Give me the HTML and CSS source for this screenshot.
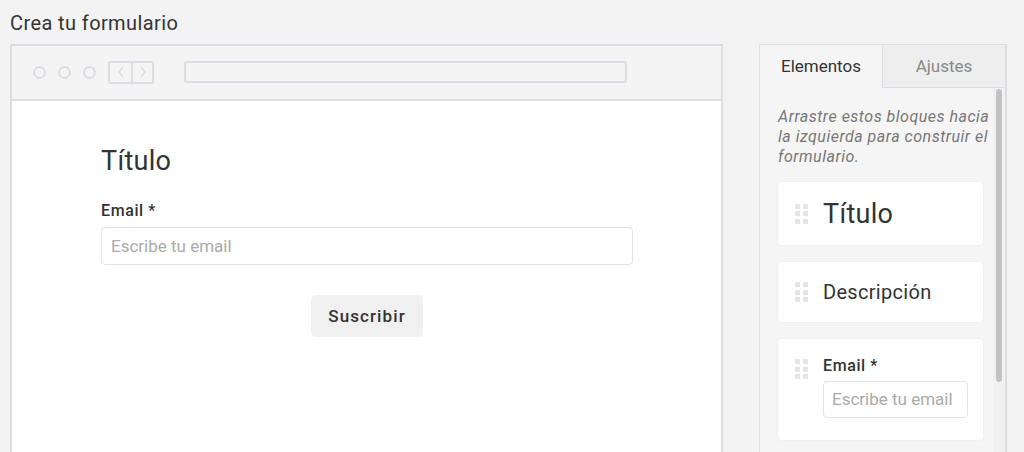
FILE: index.html
```html
<!DOCTYPE html>
<html lang="es">
<head>
<meta charset="utf-8">
<title>Crea tu formulario</title>
<link rel="stylesheet" href="styles.css">
</head>
<body>
<div class="page">
  <h1 class="page-title">Crea tu formulario</h1>
  <div class="workspace">
    <div class="browser">
      <div class="toolbar">
        <span class="dot"></span><span class="dot"></span><span class="dot"></span>
        <span class="nav">
          <span class="nav-btn"><svg width="10" height="14" viewBox="0 0 10 14"><path d="M7 2 L3 7 L7 12" fill="none" stroke="#dcdde3" stroke-width="1.6"/></svg></span>
          <span class="nav-btn nav-right"><svg width="10" height="14" viewBox="0 0 10 14"><path d="M3 2 L7 7 L3 12" fill="none" stroke="#dcdde3" stroke-width="1.6"/></svg></span>
        </span>
        <span class="address"></span>
      </div>
      <div class="viewport">
        <div class="form">
          <h2 class="form-title">Título</h2>
          <label class="field-label">Email *</label>
          <div class="input">Escribe tu email</div>
          <div class="actions"><button class="submit">Suscribir</button></div>
        </div>
      </div>
    </div>
    <div class="sidebar">
      <div class="tabs">
        <div class="tab active">Elementos</div>
        <div class="tab">Ajustes</div>
      </div>
      <div class="sidebar-body">
        <div class="sidebar-content">
          <p class="hint">Arrastre estos bloques hacia<br>la izquierda para construir el<br>formulario.</p>
          <div class="block block-title">
            <span class="handle"><i></i><i></i><i></i><i></i><i></i><i></i></span>
            <span class="block-heading">Título</span>
          </div>
          <div class="block block-desc">
            <span class="handle"><i></i><i></i><i></i><i></i><i></i><i></i></span>
            <span class="block-text">Descripción</span>
          </div>
          <div class="block block-email">
            <span class="handle"><i></i><i></i><i></i><i></i><i></i><i></i></span>
            <div class="block-field">
              <span class="block-label">Email *</span>
              <div class="block-input">Escribe tu email</div>
            </div>
          </div>
        </div>
        <div class="scrolltrack"><div class="thumb"></div></div>
      </div>
    </div>
  </div>
</div>
</body>
</html>
```
FILE: styles.css
```css
* { box-sizing: border-box; }
html, body { margin: 0; padding: 0; }
body {
  background: #f3f3f3;
  font-family: Roboto, "Liberation Sans", sans-serif;
  color: #333;
  width: 1024px;
  height: 452px;
  overflow: hidden;
}
.page { padding: 11px 0 0 10px; }
.page-title {
  margin: 0;
  font-size: 20px;
  font-weight: 400;
  line-height: 24px;
  color: #333;
  letter-spacing: 0.4px;
}
.workspace {
  display: flex;
  gap: 36px;
  margin-top: 9px;
}
.browser {
  flex: 0 0 713px;
  height: 420px;
  border: 2px solid #dcdde3;
  border-bottom: none;
  background: #fff;
  display: flex;
  flex-direction: column;
}
.toolbar {
  height: 55px;
  background: #f4f4f4;
  border-bottom: 2px solid #dcdde3;
  display: flex;
  align-items: center;
  padding-left: 21px;
  padding-bottom: 1px;
}
.dot {
  width: 13px; height: 13px;
  border: 2px solid #dcdde3;
  border-radius: 50%;
  margin-right: 12px;
}
.nav {
  display: flex;
  height: 23px;
  border: 2px solid #dcdde3;
  border-radius: 2px;
}
.nav-btn {
  width: 21px;
  display: flex; align-items: center; justify-content: center;
}
.nav-right { border-left: 2px solid #dcdde3; }
.address {
  margin-left: 30px;
  width: 443px;
  height: 22px;
  border: 2px solid #dcdde3;
  border-radius: 3px;
}
.viewport { flex: 1; padding: 44px 0 0 89px; }
.form { width: 532px; }
.form-title {
  margin: 0;
  font-size: 27px;
  font-weight: 400;
  line-height: 32px;
  color: #333;
  letter-spacing: 0.3px;
}
.field-label {
  display: block;
  margin-top: 24px;
  font-size: 16px;
  font-weight: 500;
  line-height: 20px;
  color: #333;
  letter-spacing: 0.6px;
}
.input {
  margin-top: 6px;
  height: 38px;
  border: 1px solid #e3e3e3;
  border-radius: 4px;
  padding: 0 9px;
  font-size: 17px;
  line-height: 36px;
  color: #aaa;
}
.actions { display: flex; justify-content: center; margin-top: 30px; }
.submit {
  width: 112px;
  height: 42px;
  border: none;
  border-radius: 5px;
  background: #f0f0f0;
  font-family: Roboto, "Liberation Sans", sans-serif;
  font-size: 17px;
  font-weight: 500;
  letter-spacing: 1.1px;
  color: #333;
  padding: 0;
}
.sidebar {
  flex: 0 0 248px;
  width: 248px;
  height: 420px;
  border: 1px solid #dcdde3;
  border-bottom: none;
  border-right-width: 2px;
  background: #f5f5f5;
  display: flex;
  flex-direction: column;
  overflow: hidden;
}
.tabs { display: flex; height: 43px; }
.tab {
  flex: 1;
  display: flex; align-items: center; justify-content: center;
  font-size: 17px;
  font-weight: 400;
  color: #888;
  background: #eee;
  border-bottom: 1px solid #dcdde3;
  border-left: 1px solid #dcdde3;
  padding-bottom: 1px;
}
.tab.active {
  background: #f5f5f5;
  color: #333;
  border-bottom-color: transparent;
  border-left: none;
  flex: 0 0 122px;
}
.sidebar-body { flex: 1; display: flex; min-width: 0; }
.sidebar-content { flex: 1; min-width: 0; padding: 19px 10px 0 18px; }
.hint {
  margin: 0 0 15px;
  font-size: 16px;
  font-style: italic;
  line-height: 20px;
  color: #777;
  letter-spacing: 0.5px;
  white-space: nowrap;
}
.block {
  background: #fff;
  border-radius: 4px;
  box-shadow: 0 0 2px rgba(0,0,0,0.08);
  display: flex;
  align-items: center;
  padding-left: 17px;
  margin-bottom: 17px;
}
.block-title { height: 63px; }
.block-desc { height: 60px; }
.block-email { height: 101px; align-items: flex-start; padding-top: 17px; }
.handle {
  display: grid;
  grid-template-columns: 5px 5px;
  grid-auto-rows: 5px;
  gap: 2.5px 3px;
  width: 13px;
  margin-right: 15px;
}
.block-email .handle { margin-top: 3px; }
.handle i { background: #e6e6e6; display: block; }
.block-heading { font-size: 27px; line-height: 32px; color: #333; letter-spacing: 0.3px; }
.block-text { font-size: 20px; line-height: 24px; color: #333; letter-spacing: 0.3px; }
.block-label { display: block; font-size: 16px; font-weight: 500; line-height: 20px; color: #333; letter-spacing: 0.6px; }
.block-input {
  margin-top: 5px;
  width: 145px;
  height: 37px;
  border: 1px solid #e3e3e3;
  border-radius: 4px;
  padding: 0 8px;
  font-size: 17px;
  line-height: 35px;
  color: #aaa;
  white-space: nowrap;
  overflow: hidden;
}
.scrolltrack {
  flex: 0 0 12px;
  background: #f1f1f1;
  padding: 1px 3px 0 3px;
}
.thumb {
  width: 6px;
  height: 293px;
  background: #c3c3c3;
  border-radius: 3px;
}
```
